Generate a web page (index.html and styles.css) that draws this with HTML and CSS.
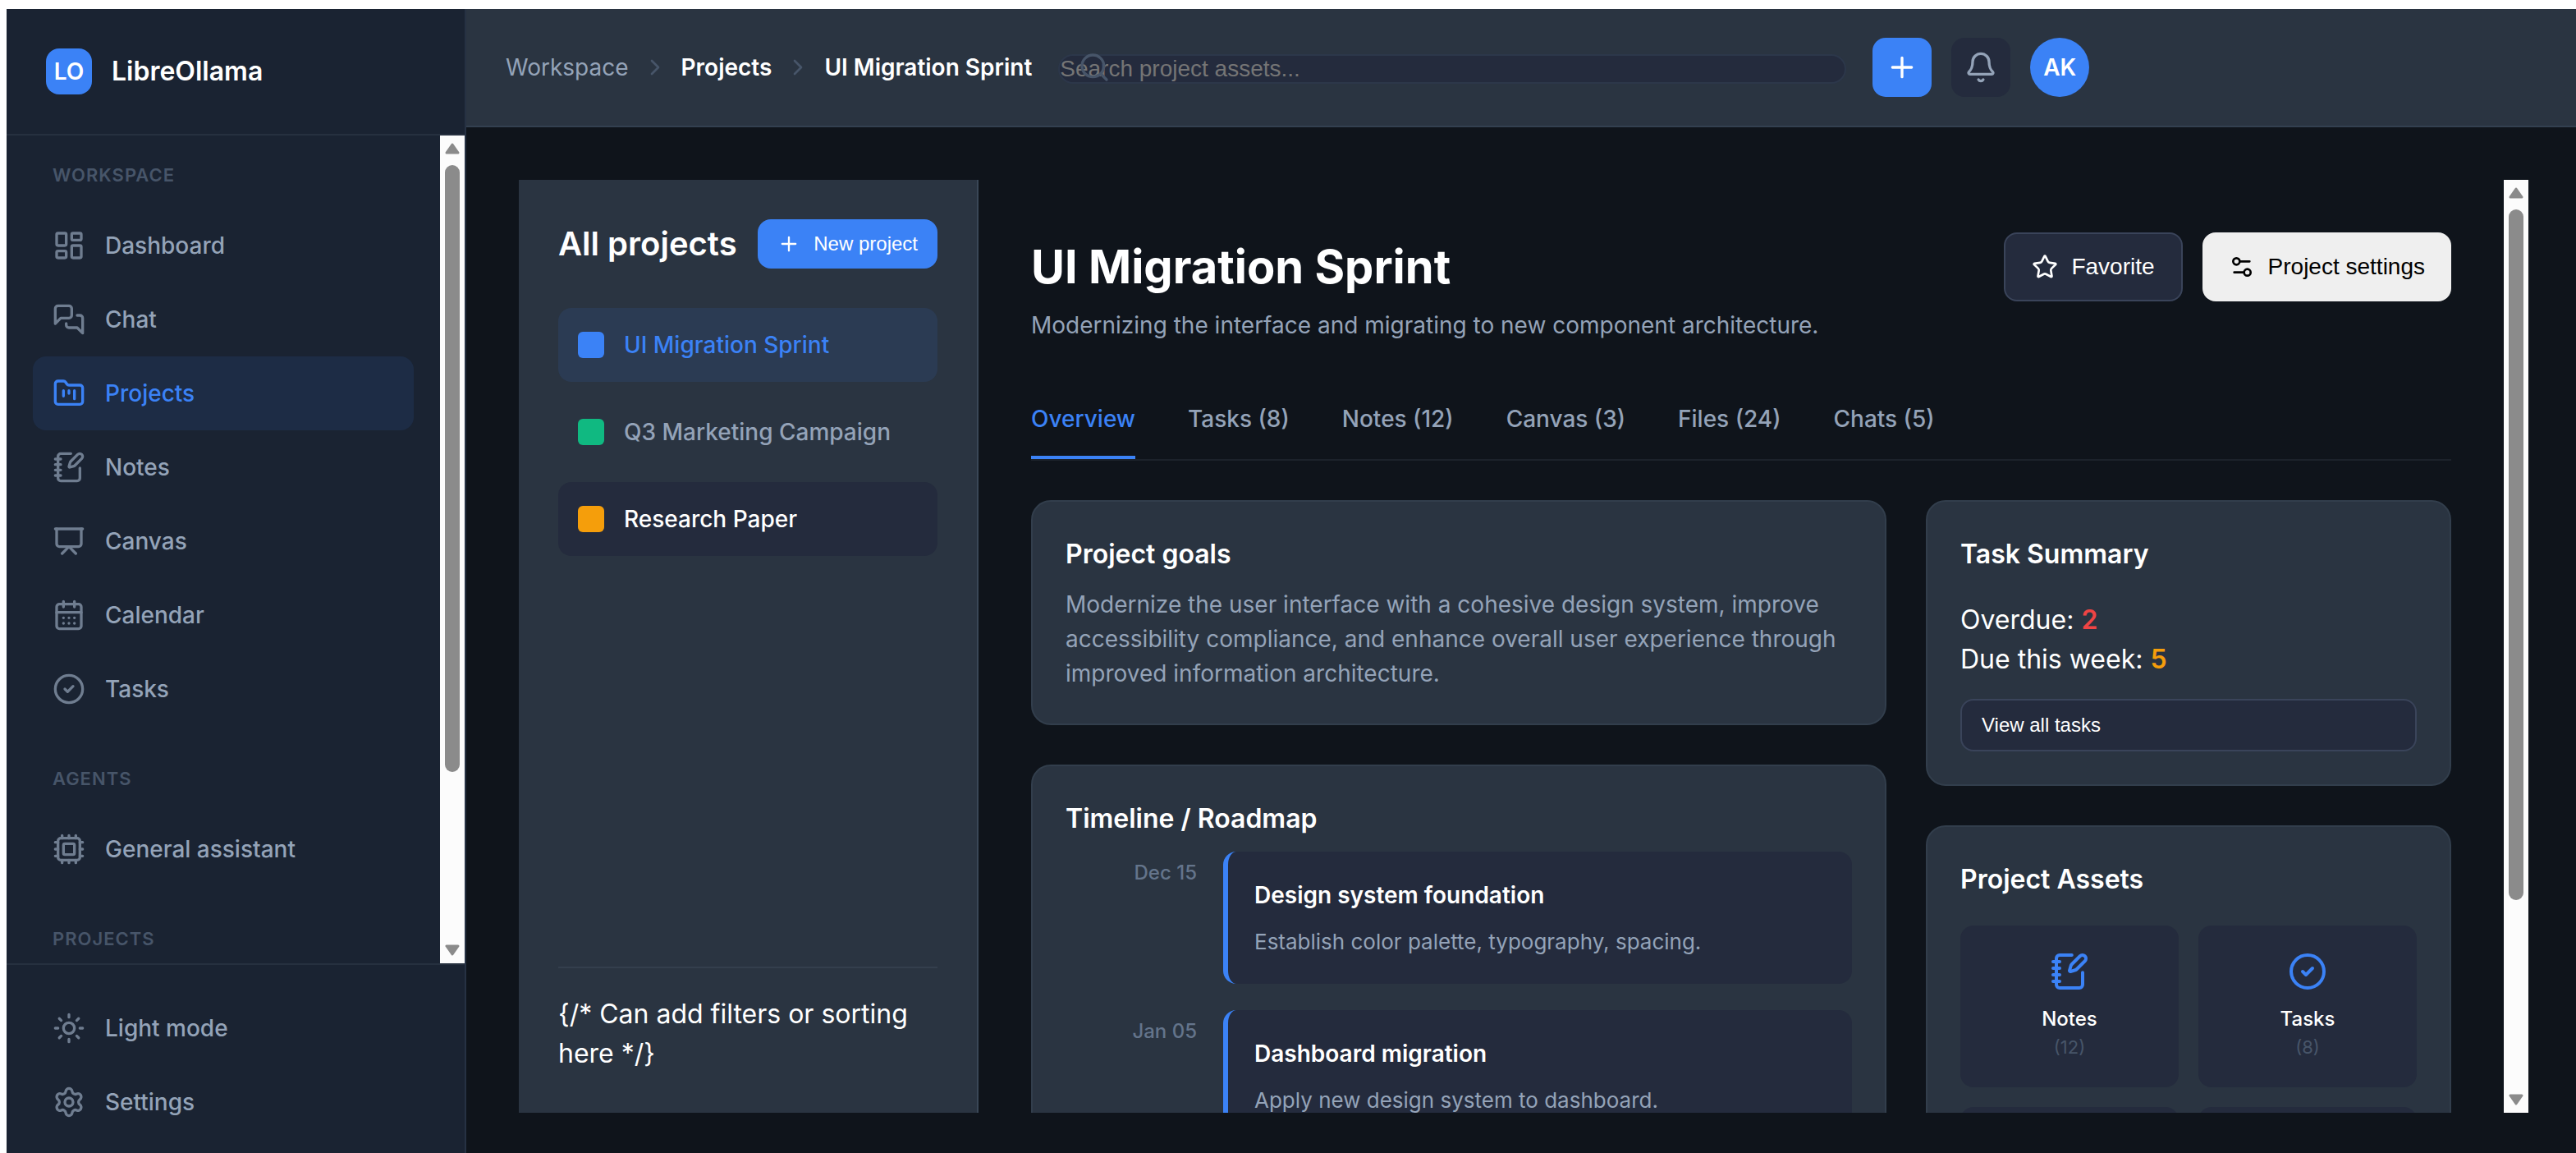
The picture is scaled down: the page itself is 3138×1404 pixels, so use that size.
FILE: index.html
```html
<!DOCTYPE html>
<html lang="en">
<head>
<meta charset="utf-8">
<meta name="viewport" content="width=device-width, initial-scale=1">
<title>LibreOllama – UI Migration Sprint</title>
<link rel="stylesheet" href="styles.css">
</head>
<body>
<svg class="sprite" aria-hidden="true">
  <symbol id="i-dashboard" viewBox="0 0 24 24"><rect width="7" height="9" x="3" y="3" rx="1"/><rect width="7" height="5" x="14" y="3" rx="1"/><rect width="7" height="9" x="14" y="12" rx="1"/><rect width="7" height="5" x="3" y="16" rx="1"/></symbol>
  <symbol id="i-chat" viewBox="0 0 24 24"><path d="M14 9a2 2 0 0 1-2 2H6l-4 4V4a2 2 0 0 1 2-2h8a2 2 0 0 1 2 2z"/><path d="M18 9h2a2 2 0 0 1 2 2v11l-4-4h-6a2 2 0 0 1-2-2v-1"/></symbol>
  <symbol id="i-projects" viewBox="0 0 24 24"><path d="M4 20h16a2 2 0 0 0 2-2V8a2 2 0 0 0-2-2h-7.93a2 2 0 0 1-1.66-.9l-.82-1.2A2 2 0 0 0 7.93 3H4a2 2 0 0 0-2 2v13c0 1.1.9 2 2 2Z"/><path d="M8 10v4M12 10v2M16 10v6"/></symbol>
  <symbol id="i-notes" viewBox="0 0 24 24"><path d="M13.4 2H6a2 2 0 0 0-2 2v16a2 2 0 0 0 2 2h12a2 2 0 0 0 2-2v-7.4"/><path d="M2 6h4M2 10h4M2 14h4M2 18h4"/><path d="M21.378 5.626a1 1 0 1 0-3.004-3.004l-5.01 5.012a2 2 0 0 0-.506.854l-.837 2.87a.5.5 0 0 0 .62.62l2.87-.837a2 2 0 0 0 .854-.506z"/></symbol>
  <symbol id="i-canvas" viewBox="0 0 24 24"><path d="M2 3h20"/><path d="M21 3v11a2 2 0 0 1-2 2H5a2 2 0 0 1-2-2V3"/><path d="m7 21 5-5 5 5"/></symbol>
  <symbol id="i-calendar" viewBox="0 0 24 24"><path d="M8 2v4M16 2v4"/><rect width="18" height="18" x="3" y="4" rx="2"/><path d="M3 10h18M8 14h.01M12 14h.01M16 14h.01M8 18h.01M12 18h.01M16 18h.01"/></symbol>
  <symbol id="i-tasks" viewBox="0 0 24 24"><circle cx="12" cy="12" r="10"/><path d="m9 12 2 2 4-4"/></symbol>
  <symbol id="i-cpu" viewBox="0 0 24 24"><path d="M12 20v2M12 2v2M17 20v2M17 2v2M2 12h2M2 17h2M2 7h2M20 12h2M20 17h2M20 7h2M7 20v2M7 2v2"/><rect x="4" y="4" width="16" height="16" rx="2"/><rect x="8" y="8" width="8" height="8" rx="1"/></symbol>
  <symbol id="i-sun" viewBox="0 0 24 24"><circle cx="12" cy="12" r="4"/><path d="M12 2v2M12 20v2M4.93 4.93l1.41 1.41M17.66 17.66l1.41 1.41M2 12h2M20 12h2M6.34 17.66l-1.41 1.41M19.07 4.93l-1.41 1.41"/></symbol>
  <symbol id="i-gear" viewBox="0 0 24 24"><path d="M9.671 4.136a2.34 2.34 0 0 1 4.659 0 2.34 2.34 0 0 0 3.319 1.915 2.34 2.34 0 0 1 2.33 4.033 2.34 2.34 0 0 0 0 3.831 2.34 2.34 0 0 1-2.33 4.033 2.34 2.34 0 0 0-3.319 1.915 2.34 2.34 0 0 1-4.659 0 2.34 2.34 0 0 0-3.32-1.915 2.34 2.34 0 0 1-2.33-4.033 2.34 2.34 0 0 0 0-3.831A2.34 2.34 0 0 1 6.35 6.051a2.34 2.34 0 0 0 3.319-1.915"/><circle cx="12" cy="12" r="3"/></symbol>
  <symbol id="i-chevron" viewBox="0 0 24 24"><path d="m9 18 6-6-6-6"/></symbol>
  <symbol id="i-search" viewBox="0 0 24 24"><path d="m21 21-4.34-4.34"/><circle cx="11" cy="11" r="8"/></symbol>
  <symbol id="i-plus" viewBox="0 0 24 24"><path d="M5 12h14M12 5v14"/></symbol>
  <symbol id="i-bell" viewBox="0 0 24 24"><path d="M10.268 21a2 2 0 0 0 3.464 0"/><path d="M3.262 15.326A1 1 0 0 0 4 17h16a1 1 0 0 0 .74-1.673C19.41 13.956 18 12.499 18 8A6 6 0 0 0 6 8c0 4.499-1.411 5.956-2.738 7.326"/></symbol>
  <symbol id="i-star" viewBox="0 0 24 24"><path d="M11.525 2.295a.53.53 0 0 1 .95 0l2.31 4.679a2.123 2.123 0 0 0 1.595 1.16l5.166.756a.53.53 0 0 1 .294.904l-3.736 3.638a2.123 2.123 0 0 0-.611 1.878l.882 5.14a.53.53 0 0 1-.771.56l-4.618-2.428a2.122 2.122 0 0 0-1.973 0L6.396 21.01a.53.53 0 0 1-.77-.56l.881-5.139a2.122 2.122 0 0 0-.611-1.879L2.16 9.795a.53.53 0 0 1 .294-.906l5.165-.755a2.122 2.122 0 0 0 1.597-1.16z"/></symbol>
  <symbol id="i-sliders" viewBox="0 0 24 24"><path d="M14 17H5M19 7h-9"/><circle cx="17" cy="17" r="3"/><circle cx="7" cy="7" r="3"/></symbol>
  <symbol id="i-arrow" viewBox="0 0 18 14"><path d="M9 2 16 12H2Z"/></symbol>
</svg>

<div class="app">
  <aside class="sidebar">
    <div class="brand"><span class="brand-mark">LO</span><span class="brand-name">LibreOllama</span></div>
    <div class="scroller">
      <nav class="nav">
        <section class="nav-group">
          <h2 class="nav-label">WORKSPACE</h2>
          <a class="nav-item" href="#"><svg class="icon"><use href="#i-dashboard"/></svg>Dashboard</a>
          <a class="nav-item" href="#"><svg class="icon"><use href="#i-chat"/></svg>Chat</a>
          <a class="nav-item active" href="#" aria-current="page"><svg class="icon"><use href="#i-projects"/></svg>Projects</a>
          <a class="nav-item" href="#"><svg class="icon"><use href="#i-notes"/></svg>Notes</a>
          <a class="nav-item" href="#"><svg class="icon"><use href="#i-canvas"/></svg>Canvas</a>
          <a class="nav-item" href="#"><svg class="icon"><use href="#i-calendar"/></svg>Calendar</a>
          <a class="nav-item" href="#"><svg class="icon"><use href="#i-tasks"/></svg>Tasks</a>
        </section>
        <section class="nav-group">
          <h2 class="nav-label">AGENTS</h2>
          <a class="nav-item" href="#"><svg class="icon"><use href="#i-cpu"/></svg>General assistant</a>
        </section>
        <section class="nav-group">
          <h2 class="nav-label">PROJECTS</h2>
        </section>
      </nav>
      <div class="scrollbar" aria-hidden="true">
        <svg class="arrow"><use href="#i-arrow"/></svg>
        <div class="track"><div class="thumb"></div></div>
        <svg class="arrow down"><use href="#i-arrow"/></svg>
      </div>
    </div>
    <div class="sidebar-footer">
      <a class="nav-item" href="#"><svg class="icon"><use href="#i-sun"/></svg>Light mode</a>
      <a class="nav-item" href="#"><svg class="icon"><use href="#i-gear"/></svg>Settings</a>
    </div>
  </aside>

  <div class="workspace">
    <header class="topbar">
      <nav class="crumbs" aria-label="Breadcrumb">
        <a href="#">Workspace</a>
        <svg class="icon icon-sm"><use href="#i-chevron"/></svg>
        <a class="crumb-strong" href="#">Projects</a>
        <svg class="icon icon-sm"><use href="#i-chevron"/></svg>
        <span class="crumb-strong">UI Migration Sprint</span>
      </nav>
      <div class="search">
        <svg class="icon"><use href="#i-search"/></svg>
        <input type="search" placeholder="Search project assets..." aria-label="Search project assets">
      </div>
      <div class="top-actions">
        <button class="square primary" type="button" aria-label="Create"><svg class="icon"><use href="#i-plus"/></svg></button>
        <button class="square" type="button" aria-label="Notifications"><svg class="icon"><use href="#i-bell"/></svg></button>
        <button class="square primary avatar" type="button">AK</button>
      </div>
    </header>

    <main class="main">
      <aside class="projects">
        <div class="projects-head">
          <h2>All projects</h2>
          <button class="btn btn-small primary" type="button"><svg class="icon"><use href="#i-plus"/></svg>New project</button>
        </div>
        <ul class="project-list">
          <li><a class="project active" href="#"><span class="swatch blue"></span>UI Migration Sprint</a></li>
          <li><a class="project" href="#"><span class="swatch green"></span>Q3 Marketing Campaign</a></li>
          <li><a class="project hover" href="#"><span class="swatch amber"></span>Research Paper</a></li>
        </ul>
        <div class="projects-foot">{/* Can add filters or sorting here */}</div>
      </aside>

      <div class="scroller">
        <div class="content">
          <div class="title-row">
            <div>
              <h1>UI Migration Sprint</h1>
              <p class="subtitle">Modernizing the interface and migrating to new component architecture.</p>
            </div>
            <div class="title-actions">
              <button class="btn outlined" type="button"><svg class="icon icon-sm"><use href="#i-star"/></svg>Favorite</button>
              <button class="btn light" type="button"><svg class="icon icon-sm"><use href="#i-sliders"/></svg>Project settings</button>
            </div>
          </div>

          <nav class="tabs">
            <a class="tab active" href="#">Overview</a>
            <a class="tab" href="#">Tasks (8)</a>
            <a class="tab" href="#">Notes (12)</a>
            <a class="tab" href="#">Canvas (3)</a>
            <a class="tab" href="#">Files (24)</a>
            <a class="tab" href="#">Chats (5)</a>
          </nav>

          <div class="columns">
            <div class="column">
              <section class="card">
                <h3>Project goals</h3>
                <p class="goals">Modernize the user interface with a cohesive design system, improve accessibility compliance, and enhance overall user experience through improved information architecture.</p>
              </section>
              <section class="card">
                <h3>Timeline / Roadmap</h3>
                <ol class="timeline">
                  <li class="milestone">
                    <time>Dec 15</time>
                    <div class="milestone-body"><h4>Design system foundation</h4><p>Establish color palette, typography, spacing.</p></div>
                  </li>
                  <li class="milestone">
                    <time>Jan 05</time>
                    <div class="milestone-body"><h4>Dashboard migration</h4><p>Apply new design system to dashboard.</p></div>
                  </li>
                </ol>
              </section>
            </div>

            <div class="column">
              <section class="card card-roomy">
                <h3>Task Summary</h3>
                <div class="summary">
                  <p>Overdue: <strong class="red">2</strong></p>
                  <p>Due this week: <strong class="orange">5</strong></p>
                </div>
                <button class="btn btn-small outlined wide" type="button">View all tasks</button>
              </section>
              <section class="card card-roomy">
                <h3>Project Assets</h3>
                <div class="assets">
                  <a class="asset" href="#"><svg class="icon"><use href="#i-notes"/></svg><span class="asset-name">Notes</span><span class="asset-count">(12)</span></a>
                  <a class="asset" href="#"><svg class="icon"><use href="#i-tasks"/></svg><span class="asset-name">Tasks</span><span class="asset-count">(8)</span></a>
                  <a class="asset" href="#"><svg class="icon"><use href="#i-canvas"/></svg></a>
                  <a class="asset" href="#"><svg class="icon"><use href="#i-chat"/></svg></a>
                </div>
              </section>
            </div>
          </div>
        </div>
        <div class="scrollbar" aria-hidden="true">
          <svg class="arrow"><use href="#i-arrow"/></svg>
          <div class="track"><div class="thumb"></div></div>
          <svg class="arrow down"><use href="#i-arrow"/></svg>
        </div>
      </div>
    </main>
  </div>
</div>
</body>
</html>
```
FILE: styles.css
```css
:root {
  --bg: #0f141b;
  --sidebar: #1a2332;
  --raised: #242b3d;
  --surface: #2a3441;
  --primary: #3b82f6;
  --text: #ffffff;
  --text-soft: #94a3b8;
  --text-dim: #64748b;
  --text-faint: #475569;
  --line: rgba(148, 163, 184, 0.1);
  --ui: "Liberation Sans", Arial, sans-serif;
}

* { box-sizing: border-box; }

body {
  margin: 0;
  height: 100vh;
  overflow: hidden;
  background: #fff;
  color: var(--text);
  font: 32px/48px Inter, sans-serif;
}

h1, h2, h3, h4, p, ul, ol { margin: 0; padding: 0; }
ul, ol { list-style: none; }
a { color: inherit; text-decoration: none; }
button { border: 0; color: inherit; font-family: var(--ui); }

.sprite { position: absolute; width: 0; height: 0; }

.icon {
  flex: none;
  width: 40px;
  height: 40px;
  fill: none;
  stroke: currentColor;
  stroke-width: 2;
  stroke-linecap: round;
  stroke-linejoin: round;
}
.icon-sm { width: 32px; height: 32px; }

/* The shell runs slightly past the right and bottom window edges */
.app {
  display: flex;
  width: calc(100vw - 2px);
  height: calc(100vh + 4px);
  margin: 11px 0 0 8px;
  background: var(--bg);
}

/* Sidebar */
.sidebar {
  flex: none;
  display: flex;
  flex-direction: column;
  width: 560px;
  background: var(--sidebar);
  border-right: 2px solid #263143;
}
.brand {
  display: flex;
  align-items: center;
  gap: 24px;
  padding: 48px;
  border-bottom: 2px solid var(--line);
  font-weight: 600;
}
.brand-mark {
  display: grid;
  place-items: center;
  width: 56px;
  height: 56px;
  border-radius: 16px;
  background: var(--primary);
  font-size: 28px;
  font-weight: 600;
}
.scroller {
  flex: 1;
  display: flex;
  min-width: 0;
  min-height: 0;
  overflow: hidden;
}
.nav {
  flex: 1;
  display: flex;
  flex-direction: column;
  gap: 48px;
  padding: 32px;
}
.nav-label {
  margin-bottom: 24px;
  padding-left: 24px;
  color: var(--text-faint);
  font-size: 22px;
  font-weight: 600;
  line-height: 33px;
  letter-spacing: 1px;
}
.nav-item {
  display: flex;
  align-items: center;
  gap: 24px;
  padding: 24px;
  border-radius: 16px;
  color: var(--text-soft);
  font-size: 28px;
  font-weight: 500;
  line-height: 42px;
}
.nav-item .icon { opacity: 0.7; }
.nav-item.active { background: rgba(59, 130, 246, 0.1); color: var(--primary); }
.nav-item.active .icon { opacity: 1; }
.sidebar-footer { padding: 32px; border-top: 2px solid var(--line); }

/* Scrollbar */
.scrollbar {
  flex: none;
  display: flex;
  flex-direction: column;
  align-items: center;
  width: 30px;
  padding: 8px 0;
  background: #fcfcfc;
}
.arrow {
  width: 18px;
  height: 16px;
  fill: #8b8b8b;
  stroke: #8b8b8b;
  stroke-width: 3;
  stroke-linejoin: round;
}
.arrow.down { transform: rotate(180deg); }
.track { flex: 1; padding: 12px 0; }
.thumb { width: 18px; height: 79%; border-radius: 9px; background: #8b8b8b; }

/* Top bar */
.workspace { flex: 1; display: flex; flex-direction: column; min-width: 0; }
.topbar {
  display: flex;
  align-items: center;
  gap: 32px;
  height: 144px;
  padding: 0 48px;
  background: var(--surface);
  border-bottom: 2px solid #334050;
}
.crumbs {
  display: flex;
  align-items: center;
  gap: 16px;
  color: var(--text-soft);
  font-size: 28px;
  line-height: 42px;
  white-space: nowrap;
}
.crumbs .icon { color: var(--text-faint); }
.crumb-strong { color: var(--text); font-weight: 600; }
.search { position: relative; flex: 0 1 960px; display: flex; padding-top: 4px; }
.search .icon { position: absolute; top: 0; left: 24px; color: var(--text-faint); }
.search input {
  width: 100%;
  padding: 0;
  border: 2px solid #2c374a;
  border-radius: 18px;
  background: var(--raised);
  color: var(--text);
  font: 28px/32px var(--ui);
}
.search input::placeholder { color: #757575; }
.top-actions { display: flex; gap: 24px; }
.square {
  display: grid;
  place-items: center;
  width: 72px;
  height: 72px;
  padding: 0;
  border-radius: 16px;
  background: var(--raised);
  color: var(--text-soft);
}
.primary { background: var(--primary); color: var(--text); }
.avatar { border-radius: 50%; font: 600 28px/42px Inter, sans-serif; }

/* Buttons */
.btn {
  display: flex;
  align-items: center;
  gap: 16px;
  padding: 24px 32px;
  border-radius: 16px;
  font-size: 28px;
  line-height: 32px;
  white-space: nowrap;
}
.btn-small { padding: 16px 24px; font-size: 24px; line-height: 28px; }
.btn-small .icon { width: 28px; height: 28px; }
.outlined { border: 2px solid #3a445a; background: var(--raised); }
.light { background: #efefef; color: #000; }
.wide { width: 100%; }

/* Project list panel */
.main { flex: 1; display: flex; min-height: 0; padding: 64px; }
.projects {
  flex: none;
  display: flex;
  flex-direction: column;
  width: 560px;
  padding: 48px;
  background: var(--surface);
  border-right: 2px solid #3a4757;
}
.projects-head {
  display: flex;
  align-items: center;
  justify-content: space-between;
  margin-bottom: 48px;
}
.projects-head h2 { font-size: 40px; font-weight: 600; line-height: 60px; white-space: nowrap; }
.project-list { flex: 1; display: flex; flex-direction: column; gap: 16px; }
.project {
  display: flex;
  align-items: center;
  gap: 24px;
  padding: 24px;
  border-radius: 16px;
  color: var(--text-soft);
  font-size: 28px;
  font-weight: 500;
  line-height: 42px;
}
.project.active { background: rgba(59, 130, 246, 0.1); color: var(--primary); }
.project.hover { background: var(--raised); color: var(--text); }
.swatch { width: 32px; height: 32px; border-radius: 6px; }
.blue { background: var(--primary); }
.green { background: #10b981; }
.amber { background: #f59e0b; }
.projects-foot { padding-top: 32px; border-top: 2px solid var(--line); }

/* Project detail */
.content { flex: 1; min-width: 0; padding: 64px; }
.title-row { display: flex; align-items: flex-start; justify-content: space-between; margin-bottom: 48px; }
h1 { margin-bottom: 8px; font-size: 56px; font-weight: 700; line-height: 84px; }
.subtitle, .goals { color: var(--text-soft); font-size: 28px; line-height: 42px; }
.title-actions { display: flex; gap: 24px; }
.tabs {
  display: flex;
  gap: 64px;
  margin-bottom: 48px;
  border-bottom: 2px solid var(--line);
}
.tab {
  padding: 24px 0;
  border-bottom: 4px solid transparent;
  color: var(--text-soft);
  font-size: 28px;
  font-weight: 500;
  line-height: 42px;
}
.tab.active { border-color: var(--primary); color: var(--primary); }

.columns { display: grid; grid-template-columns: minmax(0, 1fr) 640px; gap: 48px; align-items: start; }
.column { display: grid; gap: 48px; }
.card {
  padding: 40px;
  border: 2px solid #323e4c;
  border-radius: 24px;
  background: var(--surface);
}
.card h3 { margin-bottom: 16px; font-size: 32px; font-weight: 600; }
.card-roomy h3 { margin-bottom: 32px; }

.timeline { display: grid; gap: 32px; }
.milestone { display: grid; grid-template-columns: 160px minmax(0, 1fr); gap: 32px; }
.milestone time {
  padding-top: 8px;
  color: var(--text-dim);
  font-size: 24px;
  font-weight: 500;
  line-height: 36px;
  text-align: right;
}
.milestone-body {
  padding: 32px;
  border-left: 6px solid var(--primary);
  border-radius: 16px;
  background: var(--raised);
}
.milestone h4 { margin-bottom: 16px; font-size: 28px; font-weight: 600; line-height: 42px; }
.milestone p { color: var(--text-soft); font-size: 26px; line-height: 39px; }

.summary { margin-bottom: 24px; }
.summary strong { font-weight: 600; }
.red { color: #ef4444; }
.orange { color: #f59e0b; }

.assets { display: grid; grid-template-columns: 1fr 1fr; gap: 24px; }
.asset {
  display: flex;
  flex-direction: column;
  align-items: center;
  padding: 32px;
  border-radius: 16px;
  background: var(--raised);
}
.asset .icon { width: 48px; height: 48px; margin-bottom: 16px; color: var(--primary); }
.asset-name { font-size: 24px; font-weight: 500; line-height: 36px; }
.asset-count { color: var(--text-faint); font-size: 22px; line-height: 33px; }
```
